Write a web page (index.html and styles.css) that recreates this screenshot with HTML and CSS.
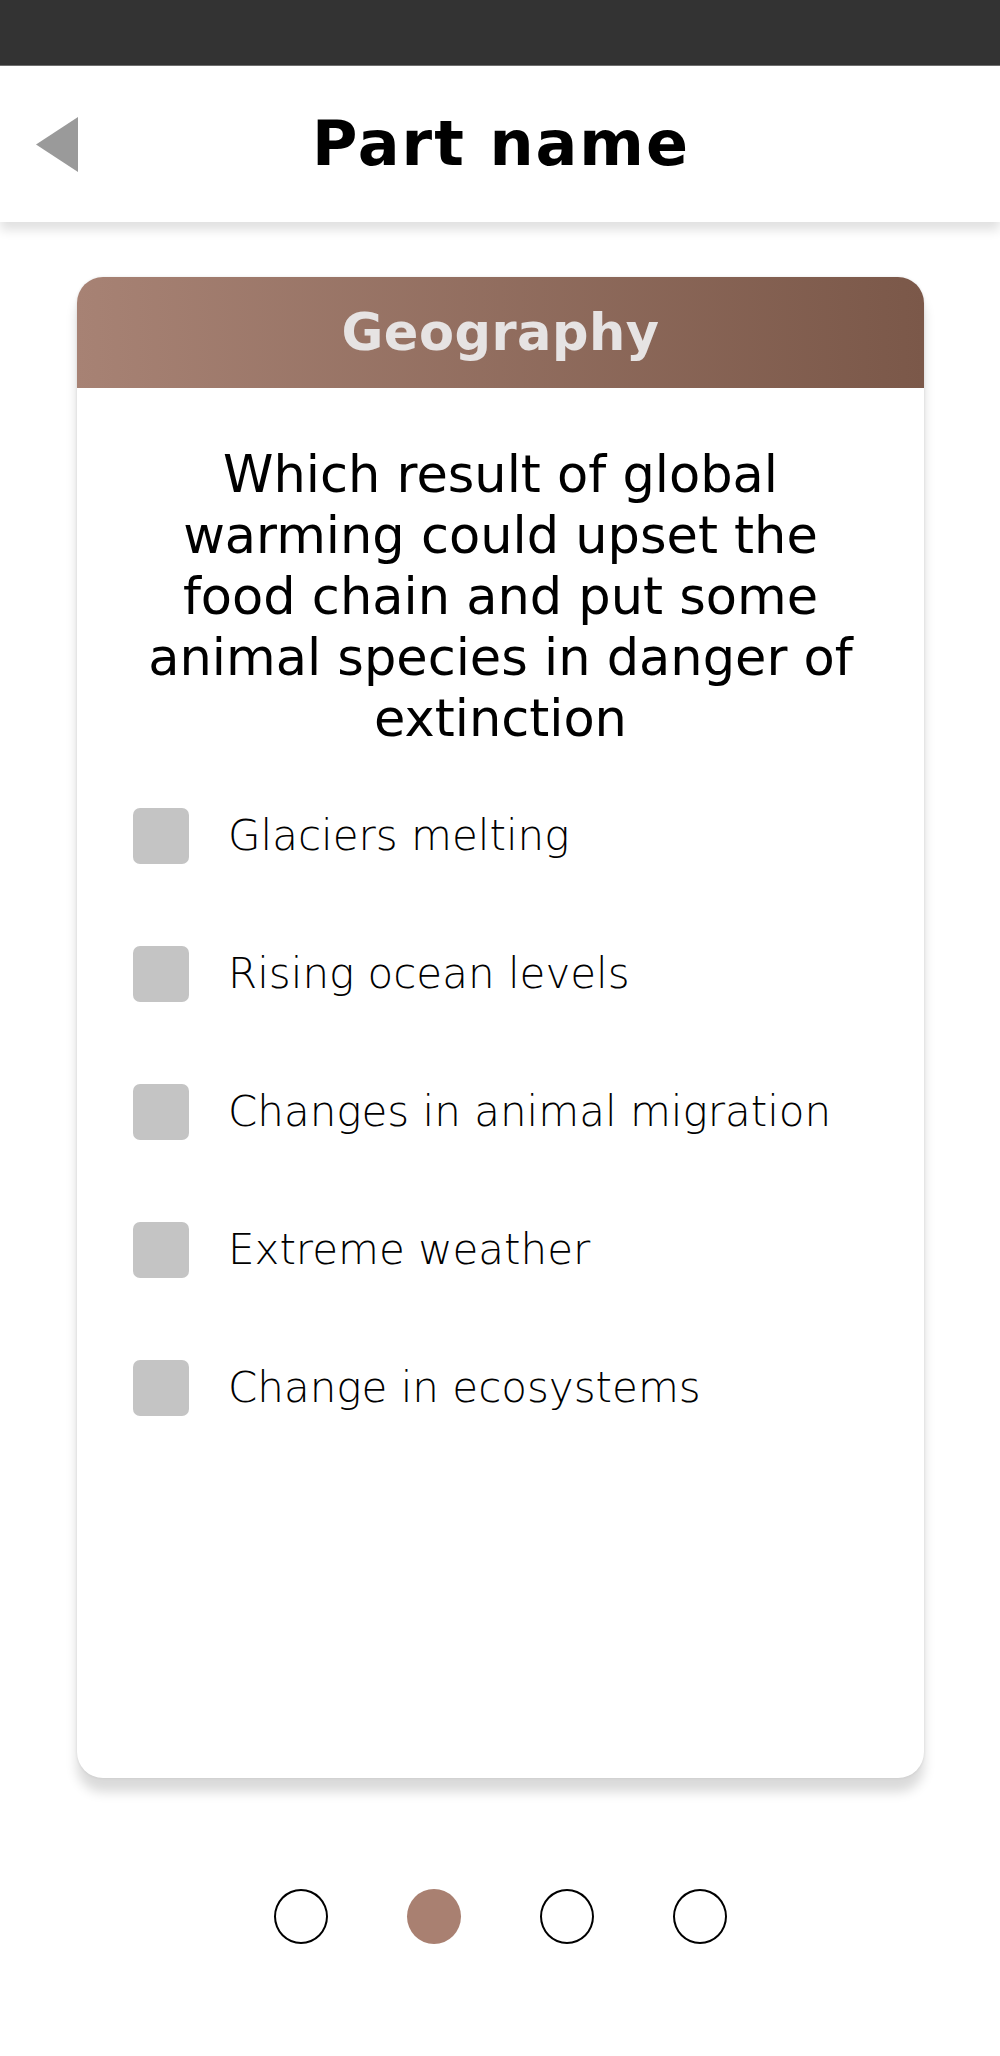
FILE: index.html
```html
<!DOCTYPE html>
<html lang="en">
<head>
<meta charset="utf-8">
<title>Part name</title>
<link rel="stylesheet" href="styles.css">
</head>
<body>
<div class="status-bar"></div>
<header class="top-bar">
  <button class="back" aria-label="Back">
    <svg width="42" height="55" viewBox="0 0 42 55"><polygon points="42,0 42,55 0,27.5" fill="#9a9a9a"/></svg>
  </button>
  <h1 class="title">Part name</h1>
</header>
<main class="content">
  <section class="card">
    <div class="card-head">Geography</div>
    <div class="card-body">
      <p class="question">Which result of global<br>warming could upset the<br>food chain and put some<br>animal species in danger of<br>extinction</p>
      <ul class="options">
        <li class="option"><span class="box"></span><span class="label">Glaciers melting</span></li>
        <li class="option"><span class="box"></span><span class="label">Rising ocean levels</span></li>
        <li class="option"><span class="box"></span><span class="label">Changes in animal migration</span></li>
        <li class="option"><span class="box"></span><span class="label">Extreme weather</span></li>
        <li class="option"><span class="box"></span><span class="label">Change in ecosystems</span></li>
      </ul>
    </div>
  </section>
  <nav class="dots">
    <span class="dot"></span>
    <span class="dot active"></span>
    <span class="dot"></span>
    <span class="dot"></span>
  </nav>
</main>
</body>
</html>
```
FILE: styles.css
```css
* { box-sizing: border-box; }
html, body { margin: 0; padding: 0; background: #fff; }
body {
  width: 1000px;
  font-family: "DejaVu Sans", "Noto Sans", sans-serif;
  color: #000;
}
.status-bar {
  height: 66px;
  background: #333333;
  border-bottom: 1px solid #6f6f6f;
}
.top-bar {
  position: relative;
  height: 156px;
  background: #fff;
  display: flex;
  align-items: center;
  justify-content: center;
  box-shadow: 0 8px 10px rgba(0,0,0,0.12);
  z-index: 1;
}
.back {
  position: absolute;
  left: 36px;
  top: 51px;
  padding: 0;
  border: 0;
  background: none;
  display: block;
  line-height: 0;
}
.title {
  margin: 0 0 0 2px;
  font-size: 62px;
  font-weight: 700;
  letter-spacing: 2px;
  line-height: 62px;
}
.content {
  padding: 55px 75px 0 77px;
}
.card {
  width: 847px;
  height: 1501px;
  border-radius: 26px;
  background: #fff;
  overflow: hidden;
  box-shadow: 0 14px 12px rgba(0,0,0,0.15), 0 0 3px rgba(0,0,0,0.1);
}
.card-head {
  height: 111px;
  background: linear-gradient(90deg, #a78274 0%, #7b5849 100%);
  color: #e6e3e3;
  font-size: 51px;
  font-weight: 700;
  letter-spacing: 0.5px;
  text-align: center;
  line-height: 111px;
}
.card-body {
  padding: 56px 0 0 0;
}
.question {
  margin: 0;
  font-size: 51px;
  line-height: 61px;
  text-align: center;
}
.options {
  list-style: none;
  margin: 59px 0 0 0;
  padding: 0 0 0 56px;
}
.option {
  display: flex;
  align-items: center;
  height: 56px;
  margin-bottom: 82px;
}
.box {
  width: 56px;
  height: 56px;
  border-radius: 7px;
  background: #c4c4c4;
  flex: none;
}
.label {
  margin-left: 39px;
  font-size: 42px;
  font-weight: 300;
  line-height: 56px;
}
.dots {
  display: flex;
  justify-content: center;
  gap: 79px;
  margin-top: 111px;
  padding-right: 2px;
}
.dot {
  width: 54px;
  height: 55px;
  border-radius: 50%;
  border: 2px solid #000;
}
.dot.active {
  background: #a98071;
  border: 0;
}
```
